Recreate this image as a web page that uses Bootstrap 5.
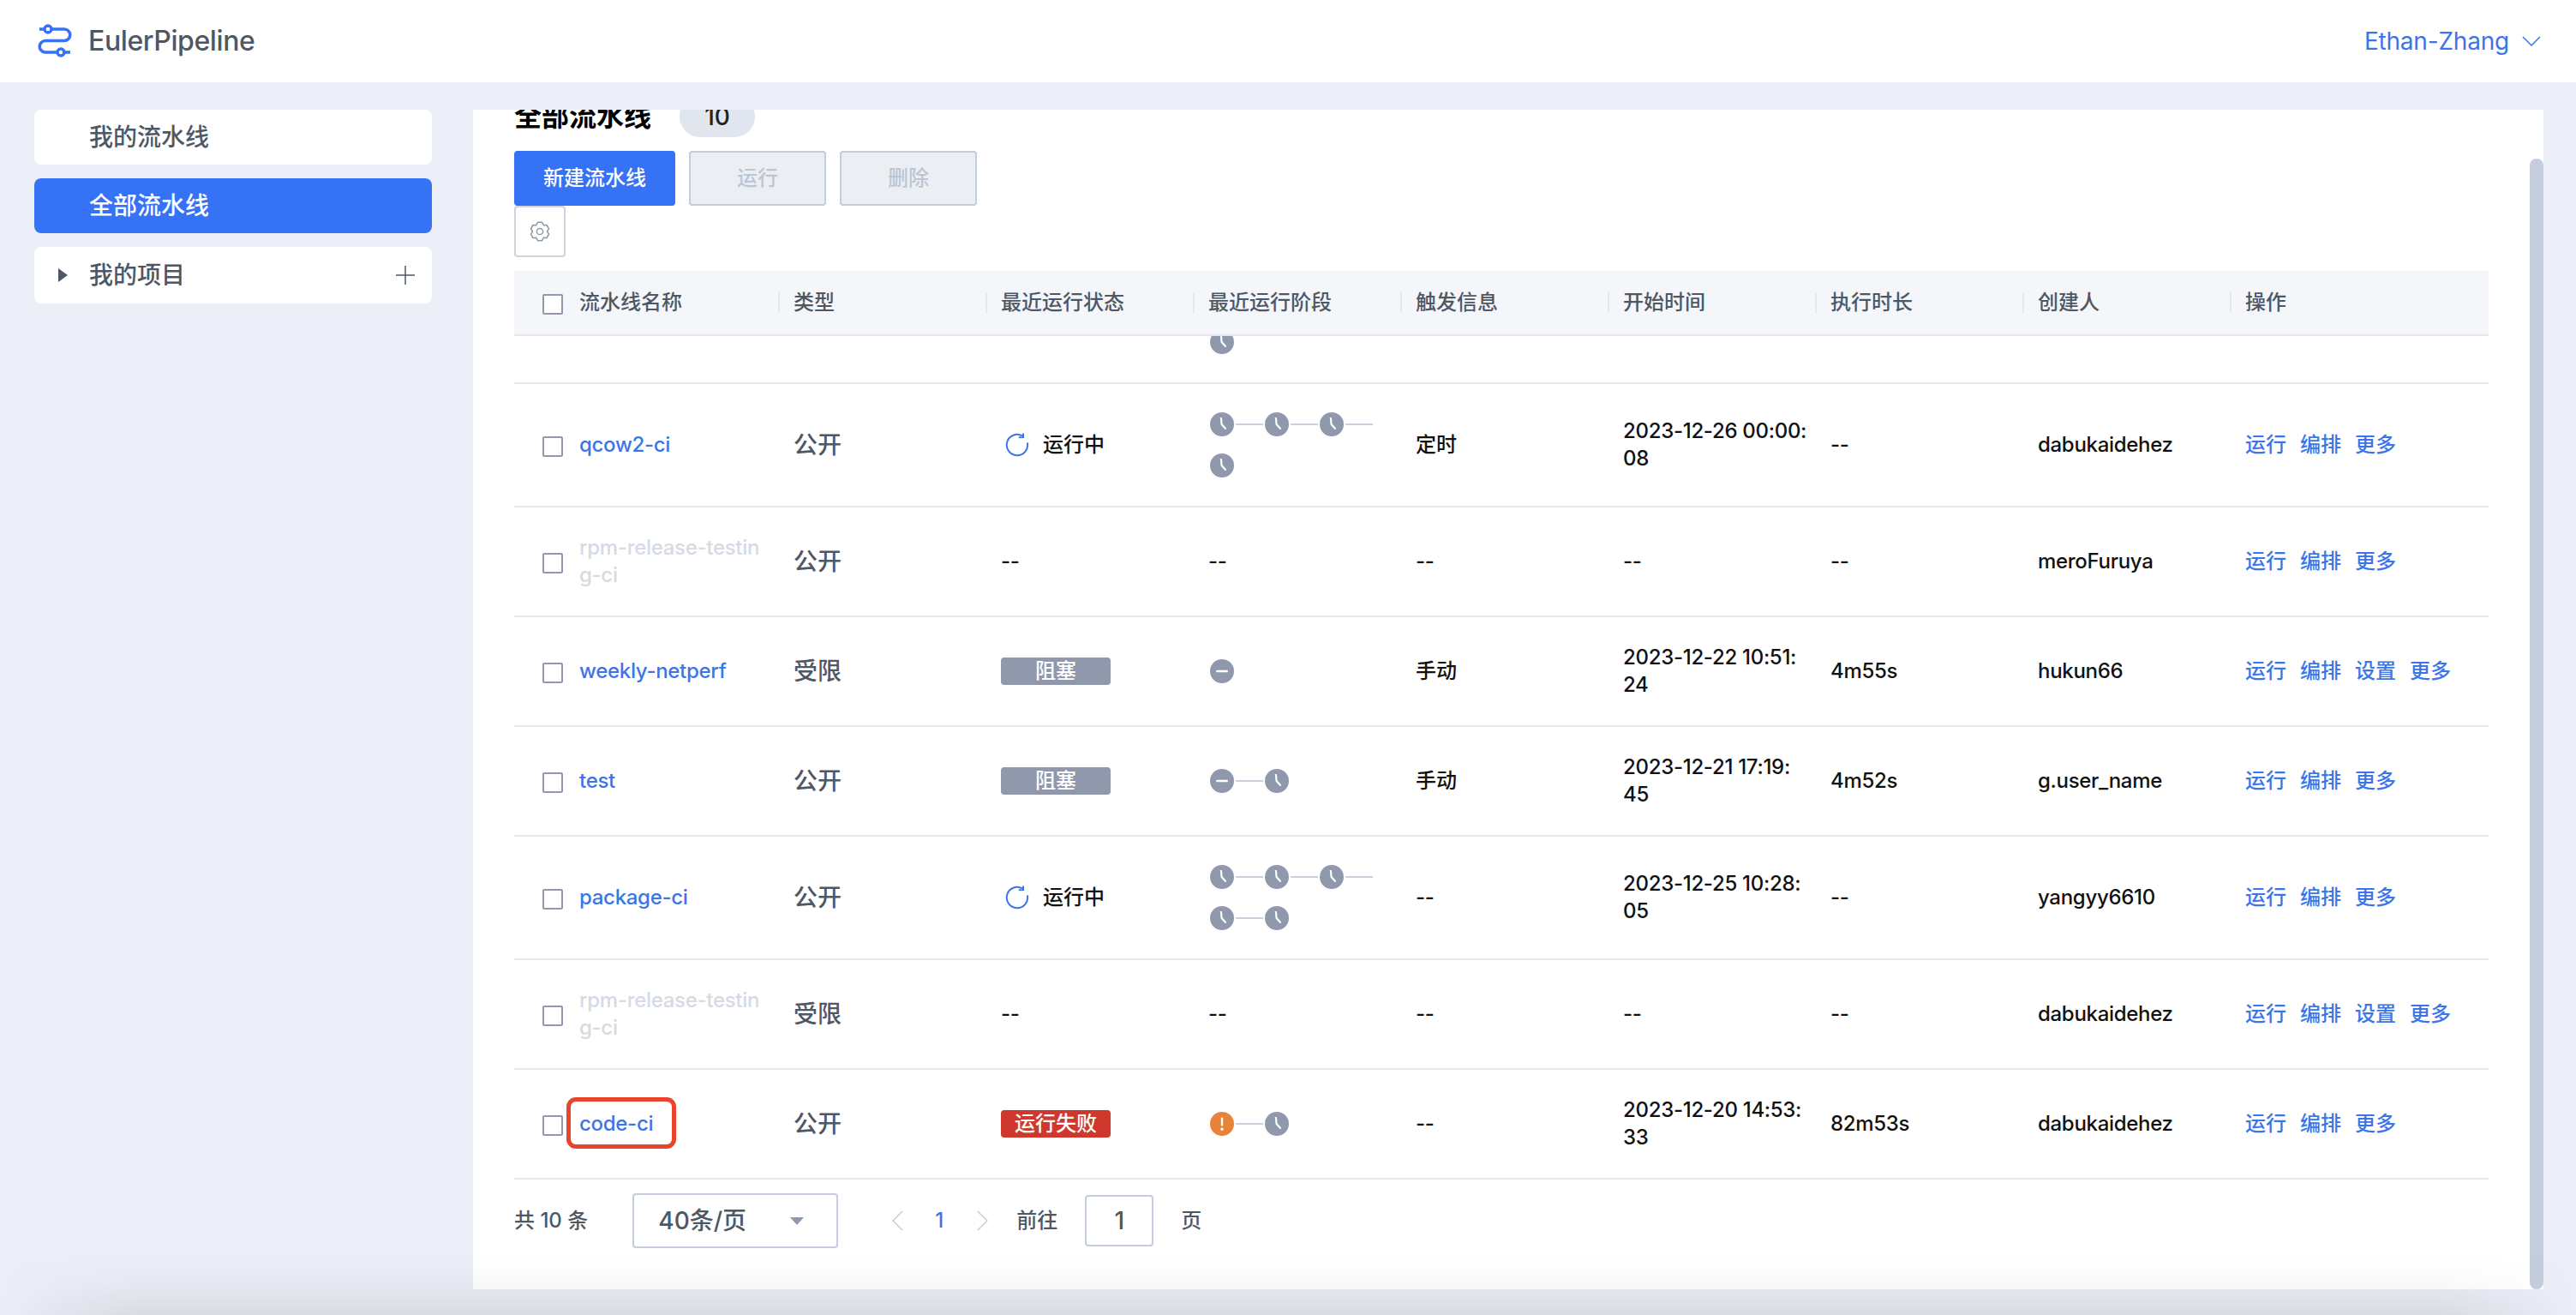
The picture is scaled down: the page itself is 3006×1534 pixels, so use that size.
<!doctype html>
<html lang="zh-CN">
<head>
<meta charset="utf-8">
<title>EulerPipeline</title>
<link rel="stylesheet" href="https://cdn.jsdelivr.net/npm/bootstrap@5.3.0/dist/css/bootstrap.min.css">
<style>
:root{--ui-blue:#3672f5;--ui-link:#3b75e8;--ui-text:#4e5865;--ui-line:#e3e7ee;--ui-grey:#8f99ab;--ui-edge:#c4cddc;}
html,body{height:100%;}
body{width:3006px;height:1534px;overflow:hidden;background:#ebeef6;color:#111;position:relative;
  font-family:Inter,"Noto Sans CJK SC",sans-serif;font-size:24px;line-height:32px;font-weight:500;}
.lat{letter-spacing:-.3px;white-space:nowrap;}
.top-bar.navbar{height:96px;background:#fff;padding:0 41px 0 44px;}
.brand-name{font-size:32px;font-weight:500;color:var(--ui-text);letter-spacing:-.4px;margin-left:19px;}
.user-name{font-size:28px;font-weight:400;color:var(--ui-link);letter-spacing:-.2px;margin-right:15px;}
.shell{padding:32px 38px 30px 40px;height:1438px;gap:48px;}
.side{width:464px;}
.side-item{height:64px;border-radius:8px;background:#fff;color:var(--ui-text);font-size:28px;padding-left:64px;display:flex;align-items:center;text-decoration:none;position:relative;}
.side-item.sel{background:var(--ui-blue);color:#fff;}
.side-item.tree{height:66px;padding-left:28px;justify-content:space-between;padding-right:20px;}
.tree-caret{width:0;height:0;border-left:11px solid var(--ui-text);border-top:8px solid transparent;border-bottom:8px solid transparent;margin-right:25px;}
.sheet{width:2416px;background:#fff;overflow:hidden;position:relative;padding:0 64px 0 48px;}
.sheet-head{margin-top:-16px;height:48px;margin-bottom:16px;gap:33px;}
.sheet-title{font-size:32px;font-weight:700;color:#000;}
.count-pill{width:88px;height:48px;border-radius:24px;background:#e1e6ee;font-size:28px;color:#222;font-weight:500;}
.act-btn{height:64px;border-radius:4px;border:2px solid var(--ui-edge);font-size:24px;line-height:32px;font-weight:500;padding:0;background:#ebeef3;color:#bcc5d3;}
.act-btn:disabled{opacity:1;background:#ebeef3;border-color:var(--ui-edge);color:#bcc5d3;}
.act-new{width:188px;background:var(--ui-blue);border-color:var(--ui-blue);color:#fff;}
.act-new:hover{background:var(--ui-blue);border-color:var(--ui-blue);color:#fff;}
.act-off{width:160px;}
.gear-btn{width:60px;height:60px;background:#fff;border:2px solid #ced5e1;border-radius:4px;padding:0;margin-bottom:16px;}
.pipe-table{width:2304px;table-layout:fixed;border-collapse:separate;border-spacing:0;margin:0;}
.pipe-table>thead>tr>th{height:76px;padding:0 16px;background:#f4f6fa;color:var(--ui-text);font-size:24px;font-weight:500;border-bottom:2px solid var(--ui-line);vertical-align:middle;position:relative;box-shadow:none;}
.pipe-table>thead>tr>th:not(:last-child)::after{content:"";position:absolute;right:0;top:25px;height:24px;width:2px;background:#e3e7ee;}
.pipe-table>tbody>tr>td{padding:0 16px;border-bottom:2px solid var(--ui-line);vertical-align:middle;background:#fff;color:#111;box-shadow:none;}
.pipe-table>tbody>tr>td.kind{font-size:28px;color:var(--ui-text);}
.pipe-table>tbody>tr{height:128px;}
.pipe-table>tbody>tr.tall{height:144px;}
.pipe-table>tbody>tr.cut{height:56px;}
.cut-box{height:54px;overflow:hidden;display:flex;flex-direction:column;justify-content:flex-end;padding-bottom:33px;}
.pipe-table>thead>tr>th.first-cell,.pipe-table>tbody>tr>td.first-cell{padding-left:33px;}
.tick{width:24px;height:24px;margin:4px 19px 0 0!important;border:2px solid var(--ui-grey);border-radius:2px!important;flex:none;}
.pipe-link{color:var(--ui-link);text-decoration:none;position:relative;white-space:nowrap;}
.pipe-link.dim{color:#d5dae3;}
.call-out{position:absolute;left:-15px;top:-15px;width:128px;height:60px;border:5px solid #e8452c;border-radius:11px;pointer-events:none;}
.stamp{display:inline-flex;align-items:center;justify-content:center;width:128px;height:32px;border-radius:4px;color:#fff;font-size:24px;}
.stamp-grey{background:var(--ui-grey);}
.stamp-red{background:#cf392d;}
.spin{width:28px;height:28px;margin:0 16px 0 5px;}
.stage-flow{display:flex;flex-wrap:wrap;row-gap:20px;margin-left:2px;}
.stage-node{display:flex;align-items:center;height:28px;}
.stage-node svg{width:28px;height:28px;display:block;}
.stage-line{width:32px;height:2px;background:#c9d0dc;margin:0 2px;}
.op-links{gap:16px;}
.op-links a{color:var(--ui-link);text-decoration:none;}
.pager{margin-top:16px;height:64px;color:var(--ui-text);}
.size-pick{width:240px;height:64px;border:2px solid var(--ui-edge);border-radius:4px;margin-left:52px;padding:0 38px 0 28px;font-size:28px;background:#fff;}
.pick-arrow{width:0;height:0;border-top:9px solid var(--ui-grey);border-left:8px solid transparent;border-right:8px solid transparent;}
.page-prev{margin-left:63px;}
.page-cur{color:var(--ui-link);margin:0 37px 0 35px;width:14px;text-align:center;}
.page-goto{margin-left:33px;}
.page-jump{width:80px;height:60px;border:2px solid var(--ui-edge);border-radius:4px;font-size:28px;margin:0 32px 0 32px;background:#fff;}
.scroll-thumb{position:absolute;right:0;top:57px;bottom:0;width:16px;background:var(--ui-edge);border-radius:8px;}
.win-shade{position:absolute;left:0;right:0;bottom:0;height:70px;pointer-events:none;
  background:linear-gradient(to top,rgba(70,60,80,.1),rgba(70,60,80,.03) 50%,rgba(70,60,80,0));
  -webkit-mask-image:linear-gradient(to right,transparent,#000 160px,#000 calc(100% - 160px),transparent);
  mask-image:linear-gradient(to right,transparent,#000 160px,#000 calc(100% - 160px),transparent);}
</style>
</head>
<body>
<svg width="0" height="0" class="d-none" aria-hidden="true">
  <symbol id="i-clock" viewBox="0 0 28 28"><circle cx="14" cy="14" r="14" fill="#8f99ab"/><polyline points="12.8,6 13.6,14 18.6,19.6" fill="none" stroke="#fff" stroke-width="2.2"/></symbol>
  <symbol id="i-stop" viewBox="0 0 28 28"><circle cx="14" cy="14" r="14" fill="#8f99ab"/><rect x="7" y="12.7" width="14" height="2.6" rx="1.3" fill="#fff"/></symbol>
  <symbol id="i-warn" viewBox="0 0 28 28"><circle cx="14" cy="14" r="14" fill="#e8833a"/><rect x="12.8" y="6.5" width="2.4" height="10" rx="1.2" fill="#fff"/><circle cx="14" cy="20.2" r="1.6" fill="#fff"/></symbol>
  <symbol id="i-spin" viewBox="0 0 28 28"><path d="M25.9 11.5A12.2 12.2 0 1 1 20 3.4" fill="none" stroke="#3b75e8" stroke-width="2"/><polyline points="21,0.4 21,5 15.8,5.2" fill="none" stroke="#3b75e8" stroke-width="2"/></symbol>
</svg>

<header class="top-bar navbar d-flex align-items-center justify-content-between">
  <a class="d-flex align-items-center text-decoration-none" href="#">
    <svg width="40" height="40" viewBox="0 0 40 40" fill="none">
      <path d="M2 6H31a6.75 6.75 0 0 1 0 13.5H9a6.75 6.75 0 0 0 0 13.5H38" stroke="#3672f5" stroke-width="3.6"/>
      <circle cx="12" cy="6" r="4" fill="#fff" stroke="#3672f5" stroke-width="3.4"/>
      <circle cx="27" cy="33" r="4" fill="#fff" stroke="#3672f5" stroke-width="3.4"/>
    </svg>
    <span class="brand-name">EulerPipeline</span>
  </a>
  <a class="d-flex align-items-center text-decoration-none" href="#">
    <span class="user-name">Ethan-Zhang</span>
    <svg width="22" height="12" viewBox="0 0 22 12" fill="none"><polyline points="1,1 11,11 21,1" stroke="#3b75e8" stroke-width="1.5"/></svg>
  </a>
</header>

<div class="shell d-flex">
  <nav class="side d-flex flex-column gap-3">
    <a class="side-item" href="#">我的流水线</a>
    <a class="side-item sel" href="#">全部流水线</a>
    <a class="side-item tree" href="#">
      <span class="d-flex align-items-center"><span class="tree-caret"></span>我的项目</span>
      <svg width="22" height="22" viewBox="0 0 22 22" fill="none"><path d="M11 0V22M0 11H22" stroke="#4e5865" stroke-width="1.5"/></svg>
    </a>
  </nav>

  <main class="sheet">
    <div class="sheet-head d-flex align-items-center">
      <span class="sheet-title">全部流水线</span>
      <span class="count-pill d-flex align-items-center justify-content-center">10</span>
    </div>
    <div class="d-flex gap-3">
      <button class="btn act-btn act-new" type="button">新建流水线</button>
      <button class="btn act-btn act-off" type="button" disabled>运行</button>
      <button class="btn act-btn act-off" type="button" disabled>删除</button>
    </div>
    <button class="btn gear-btn d-flex align-items-center justify-content-center" type="button" aria-label="设置">
      <svg width="24" height="24" viewBox="0 0 24 24" fill="none" stroke="#8f99ab" stroke-width="1.5" stroke-linejoin="round">
        <polygon points="9.53,1.28 14.47,1.28 16.25,4.64 20.04,4.5 22.52,8.78 20.5,12 22.52,15.22 20.04,19.5 16.25,19.36 14.47,22.72 9.53,22.72 7.75,19.36 3.96,19.5 1.48,15.22 3.5,12 1.48,8.78 3.96,4.5 7.75,4.64"/>
        <circle cx="12" cy="12" r="3.6"/>
      </svg>
    </button>

    <table class="table pipe-table">
      <colgroup><col style="width:310px"><col style="width:242px"><col style="width:242px"><col style="width:242px"><col style="width:242px"><col style="width:242px"><col style="width:242px"><col style="width:242px"><col style="width:300px"></colgroup>
      <thead><tr>
        <th class="first-cell"><div class="d-flex align-items-center"><input class="form-check-input tick" type="checkbox" aria-label="全选">流水线名称</div></th>
        <th>类型</th><th>最近运行状态</th><th>最近运行阶段</th><th>触发信息</th><th>开始时间</th><th>执行时长</th><th>创建人</th><th>操作</th>
      </tr></thead>
      <tbody>
        <tr class="cut"><td></td><td></td><td></td>
          <td class="py-0"><div class="cut-box"><div class="stage-flow"><div class="stage-node"><svg><use href="#i-clock"/></svg></div></div></div></td>
          <td></td><td></td><td></td><td></td><td></td></tr>

        <tr class="tall">
          <td class="first-cell"><div class="d-flex align-items-center"><input class="form-check-input tick" type="checkbox" aria-label="选择"><a class="pipe-link lat" href="#">qcow2-ci</a></div></td>
          <td class="kind">公开</td>
          <td><div class="d-flex align-items-center"><svg class="spin"><use href="#i-spin"/></svg>运行中</div></td>
          <td><div class="stage-flow">
            <div class="stage-node"><svg><use href="#i-clock"/></svg><span class="stage-line"></span></div>
            <div class="stage-node"><svg><use href="#i-clock"/></svg><span class="stage-line"></span></div>
            <div class="stage-node"><svg><use href="#i-clock"/></svg><span class="stage-line"></span></div>
            <div class="stage-node"><svg><use href="#i-clock"/></svg></div>
          </div></td>
          <td>定时</td>
          <td class="lat">2023-12-26 00:00:<br>08</td>
          <td class="lat">--</td>
          <td class="lat">dabukaidehez</td>
          <td><div class="op-links d-flex"><a href="#">运行</a><a href="#">编排</a><a href="#">更多</a></div></td>
        </tr>

        <tr>
          <td class="first-cell"><div class="d-flex align-items-center"><input class="form-check-input tick" type="checkbox" aria-label="选择"><a class="pipe-link dim lat" href="#">rpm-release-testin<br>g-ci</a></div></td>
          <td class="kind">公开</td>
          <td class="lat">--</td><td class="lat">--</td><td class="lat">--</td><td class="lat">--</td><td class="lat">--</td>
          <td class="lat">meroFuruya</td>
          <td><div class="op-links d-flex"><a href="#">运行</a><a href="#">编排</a><a href="#">更多</a></div></td>
        </tr>

        <tr>
          <td class="first-cell"><div class="d-flex align-items-center"><input class="form-check-input tick" type="checkbox" aria-label="选择"><a class="pipe-link lat" href="#">weekly-netperf</a></div></td>
          <td class="kind">受限</td>
          <td><span class="stamp stamp-grey">阻塞</span></td>
          <td><div class="stage-flow"><div class="stage-node"><svg><use href="#i-stop"/></svg></div></div></td>
          <td>手动</td>
          <td class="lat">2023-12-22 10:51:<br>24</td>
          <td class="lat">4m55s</td>
          <td class="lat">hukun66</td>
          <td><div class="op-links d-flex"><a href="#">运行</a><a href="#">编排</a><a href="#">设置</a><a href="#">更多</a></div></td>
        </tr>

        <tr>
          <td class="first-cell"><div class="d-flex align-items-center"><input class="form-check-input tick" type="checkbox" aria-label="选择"><a class="pipe-link lat" href="#">test</a></div></td>
          <td class="kind">公开</td>
          <td><span class="stamp stamp-grey">阻塞</span></td>
          <td><div class="stage-flow"><div class="stage-node"><svg><use href="#i-stop"/></svg><span class="stage-line"></span></div><div class="stage-node"><svg><use href="#i-clock"/></svg></div></div></td>
          <td>手动</td>
          <td class="lat">2023-12-21 17:19:<br>45</td>
          <td class="lat">4m52s</td>
          <td class="lat">g.user_name</td>
          <td><div class="op-links d-flex"><a href="#">运行</a><a href="#">编排</a><a href="#">更多</a></div></td>
        </tr>

        <tr class="tall">
          <td class="first-cell"><div class="d-flex align-items-center"><input class="form-check-input tick" type="checkbox" aria-label="选择"><a class="pipe-link lat" href="#">package-ci</a></div></td>
          <td class="kind">公开</td>
          <td><div class="d-flex align-items-center"><svg class="spin"><use href="#i-spin"/></svg>运行中</div></td>
          <td><div class="stage-flow">
            <div class="stage-node"><svg><use href="#i-clock"/></svg><span class="stage-line"></span></div>
            <div class="stage-node"><svg><use href="#i-clock"/></svg><span class="stage-line"></span></div>
            <div class="stage-node"><svg><use href="#i-clock"/></svg><span class="stage-line"></span></div>
            <div class="stage-node"><svg><use href="#i-clock"/></svg><span class="stage-line"></span></div>
            <div class="stage-node"><svg><use href="#i-clock"/></svg></div>
          </div></td>
          <td class="lat">--</td>
          <td class="lat">2023-12-25 10:28:<br>05</td>
          <td class="lat">--</td>
          <td class="lat">yangyy6610</td>
          <td><div class="op-links d-flex"><a href="#">运行</a><a href="#">编排</a><a href="#">更多</a></div></td>
        </tr>

        <tr>
          <td class="first-cell"><div class="d-flex align-items-center"><input class="form-check-input tick" type="checkbox" aria-label="选择"><a class="pipe-link dim lat" href="#">rpm-release-testin<br>g-ci</a></div></td>
          <td class="kind">受限</td>
          <td class="lat">--</td><td class="lat">--</td><td class="lat">--</td><td class="lat">--</td><td class="lat">--</td>
          <td class="lat">dabukaidehez</td>
          <td><div class="op-links d-flex"><a href="#">运行</a><a href="#">编排</a><a href="#">设置</a><a href="#">更多</a></div></td>
        </tr>

        <tr>
          <td class="first-cell"><div class="d-flex align-items-center"><input class="form-check-input tick" type="checkbox" aria-label="选择"><a class="pipe-link lat" href="#">code-ci<span class="call-out"></span></a></div></td>
          <td class="kind">公开</td>
          <td><span class="stamp stamp-red">运行失败</span></td>
          <td><div class="stage-flow"><div class="stage-node"><svg><use href="#i-warn"/></svg><span class="stage-line"></span></div><div class="stage-node"><svg><use href="#i-clock"/></svg></div></div></td>
          <td class="lat">--</td>
          <td class="lat">2023-12-20 14:53:<br>33</td>
          <td class="lat">82m53s</td>
          <td class="lat">dabukaidehez</td>
          <td><div class="op-links d-flex"><a href="#">运行</a><a href="#">编排</a><a href="#">更多</a></div></td>
        </tr>
      </tbody>
    </table>

    <div class="pager d-flex align-items-center">
      <span>共 10 条</span>
      <div class="size-pick d-flex align-items-center justify-content-between"><span>40条/页</span><span class="pick-arrow"></span></div>
      <svg class="page-prev" width="13" height="24" viewBox="0 0 13 24" fill="none"><polyline points="12,1 1,12 12,23" stroke="#c4cddc" stroke-width="1.5"/></svg>
      <span class="page-cur">1</span>
      <svg width="13" height="24" viewBox="0 0 13 24" fill="none"><polyline points="1,1 12,12 1,23" stroke="#c4cddc" stroke-width="1.5"/></svg>
      <span class="page-goto">前往</span>
      <span class="page-jump d-flex align-items-center justify-content-center">1</span>
      <span>页</span>
    </div>
    <div class="scroll-thumb"></div>
  </main>
</div>
<div class="win-shade"></div>
<script src="https://cdn.jsdelivr.net/npm/bootstrap@5.3.0/dist/js/bootstrap.bundle.min.js"></script>
</body>
</html>
